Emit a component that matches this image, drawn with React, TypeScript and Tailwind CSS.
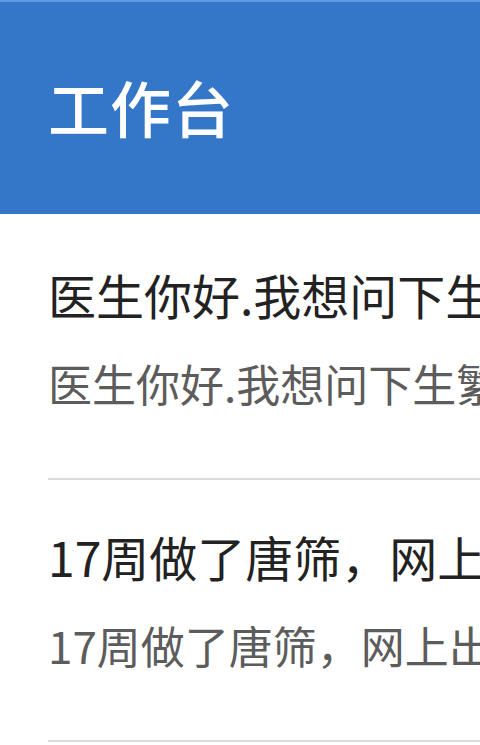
import React from "react"

const font = { fontFamily: '"Noto Sans CJK SC", "Noto Sans", sans-serif' }

const items = [
  {
    title: "医生你好.我想问下生繁殖能力的问题",
    summary: "医生你好.我想问下生繁殖能力的问题，谢谢",
  },
  {
    title: "17周做了唐筛，网上出来结果了",
    summary: "17周做了唐筛，网上出来结果了，想咨询一下",
  },
]

export default function App() {
  return (
    <div className="w-[480px] h-[745px] overflow-hidden bg-white" style={font}>
      {/* Header */}
      <header className="h-[214px] bg-[#3476c7] border-t-2 border-[#5b9be0] flex items-center pl-[48px]">
        <h1 className="text-[61px] leading-none text-white font-medium tracking-[1px] -mt-[4px]">工作台</h1>
      </header>

      {/* List */}
      <ul className="pt-[4px]">
        {items.map((item) => (
          <li key={item.title} className="ml-[48px] border-b-2 border-[#dcdcdc] pt-[48px] pb-[69px]">
            <div className="text-[48px] leading-[56px] text-[#222222] whitespace-nowrap overflow-hidden">
              {item.title}
            </div>
            <div className="mt-[35px] text-[44px] leading-[52px] text-[#5c5c5c] whitespace-nowrap overflow-hidden">
              {item.summary}
            </div>
          </li>
        ))}
      </ul>
    </div>
  )
}
